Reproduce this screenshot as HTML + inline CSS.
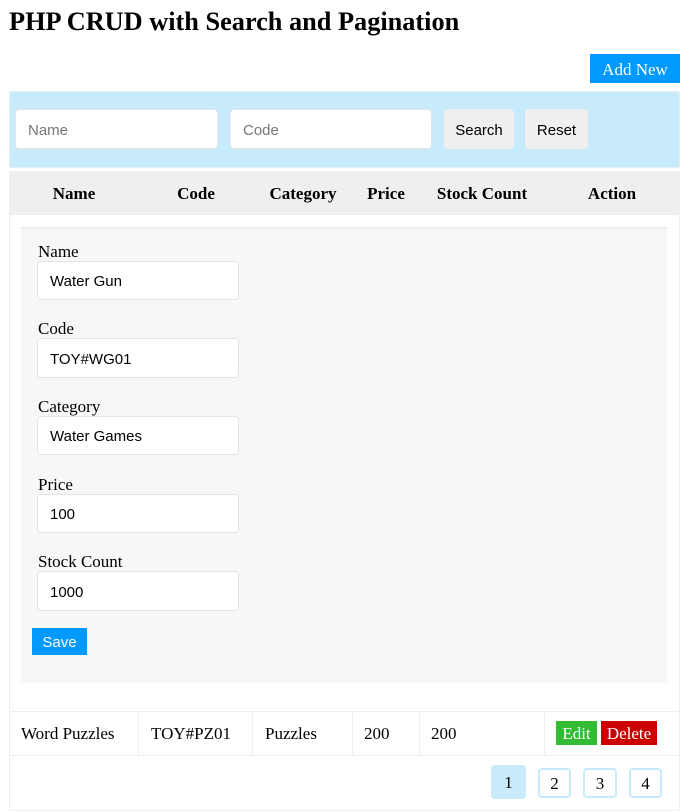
<!DOCTYPE html>
<html><head><style>
*{margin:0;padding:0;box-sizing:border-box}
body{width:696px;height:812px;background:#fff;font-family:"Liberation Serif",serif;position:relative;overflow:hidden;color:#000}
.a{position:absolute}
.inp{position:absolute;background:#fff;border:1px solid #e4e4e4;border-radius:4px;font-family:"Liberation Sans",sans-serif;font-size:15px;padding-left:12px;padding-top:2px;display:flex;align-items:center}
.lbl{position:absolute;left:38px;font-size:17px}
.th{position:absolute;top:184px;font-weight:bold;font-size:17px;transform:translateX(-50%);white-space:nowrap}
.td{position:absolute;top:724px;font-size:17px}
.vl{position:absolute;top:711px;height:44px;width:1px;background:#eee}
.pg{position:absolute;border:2px solid #c8ebfb;border-radius:4px;font-size:17px;display:flex;align-items:center;justify-content:center}
</style></head><body>
<div class="a" style="left:9px;top:7px;font-size:26.3px;font-weight:bold">PHP CRUD with Search and Pagination</div>
<div class="a" style="left:590px;top:54px;width:90px;height:29px;background:#0099ff;color:#fff;font-size:17px;display:flex;align-items:center;justify-content:center;padding-top:2px">Add New</div>
<div class="a" style="left:9px;top:91px;width:671px;height:77px;background:#c8ebfb;border:1px solid #e4f2f8"></div>
<div class="inp" style="left:15px;top:109px;width:203px;height:40px;color:#777">Name</div>
<div class="inp" style="left:230px;top:109px;width:202px;height:40px;color:#777">Code</div>
<div class="a" style="left:444px;top:109px;width:70px;height:40px;background:#efefef;border-radius:4px;font-family:'Liberation Sans',sans-serif;font-size:15px;display:flex;align-items:center;justify-content:center;padding-top:2px">Search</div>
<div class="a" style="left:525px;top:109px;width:63px;height:40px;background:#efefef;border-radius:4px;font-family:'Liberation Sans',sans-serif;font-size:15px;display:flex;align-items:center;justify-content:center;padding-top:2px">Reset</div>
<div class="a" style="left:9px;top:171px;width:671px;height:44px;background:#efefef"></div>
<div class="th" style="left:74px">Name</div>
<div class="th" style="left:196px">Code</div>
<div class="th" style="left:303px">Category</div>
<div class="th" style="left:386px">Price</div>
<div class="th" style="left:482px">Stock Count</div>
<div class="th" style="left:612px">Action</div>
<div class="a" style="left:9px;top:215px;width:671px;height:596px;border:1px solid #eee;border-top:none"></div>
<div class="a" style="left:21px;top:227px;width:646px;height:456px;background:#f8f6f7;border-top:2px solid #eee"></div>
<div class="lbl" style="top:242px">Name</div>
<div class="inp" style="left:37px;top:261px;width:202px;height:39px">Water Gun</div>
<div class="lbl" style="top:319px">Code</div>
<div class="inp" style="left:37px;top:338px;width:202px;height:40px">TOY#WG01</div>
<div class="lbl" style="top:397px">Category</div>
<div class="inp" style="left:37px;top:416px;width:202px;height:39px">Water Games</div>
<div class="lbl" style="top:475px">Price</div>
<div class="inp" style="left:37px;top:494px;width:202px;height:39px">100</div>
<div class="lbl" style="top:552px">Stock Count</div>
<div class="inp" style="left:37px;top:571px;width:202px;height:40px">1000</div>
<div class="a" style="left:32px;top:628px;width:55px;height:27px;background:#0099ff;color:#fff;font-family:'Liberation Sans',sans-serif;font-size:15px;display:flex;align-items:center;justify-content:center;padding-top:2px">Save</div>
<div class="a" style="left:9px;top:711px;width:671px;height:1px;background:#eee"></div>
<div class="a" style="left:9px;top:755px;width:671px;height:1px;background:#eee"></div>
<div class="vl" style="left:138px"></div><div class="vl" style="left:252px"></div><div class="vl" style="left:352px"></div><div class="vl" style="left:419px"></div><div class="vl" style="left:544px"></div>
<div class="td" style="left:21px">Word Puzzles</div>
<div class="td" style="left:151px">TOY#PZ01</div>
<div class="td" style="left:265px">Puzzles</div>
<div class="td" style="left:364px">200</div>
<div class="td" style="left:431px">200</div>
<div class="a" style="left:556px;top:721px;width:41px;height:24px;background:#33bb33;color:#fff;font-size:17px;display:flex;align-items:center;justify-content:center;padding-top:2px">Edit</div>
<div class="a" style="left:601px;top:721px;width:56px;height:24px;background:#cc0000;color:#fff;font-size:17px;display:flex;align-items:center;justify-content:center;padding-top:2px">Delete</div>
<div class="pg" style="left:491px;top:765px;width:35px;height:34px;background:#c8ebfb;padding-top:2px">1</div>
<div class="pg" style="left:538px;top:768px;width:33px;height:30px;padding-top:2px">2</div>
<div class="pg" style="left:583px;top:768px;width:34px;height:30px;padding-top:2px">3</div>
<div class="pg" style="left:629px;top:768px;width:33px;height:30px;padding-top:2px">4</div>
</body></html>
